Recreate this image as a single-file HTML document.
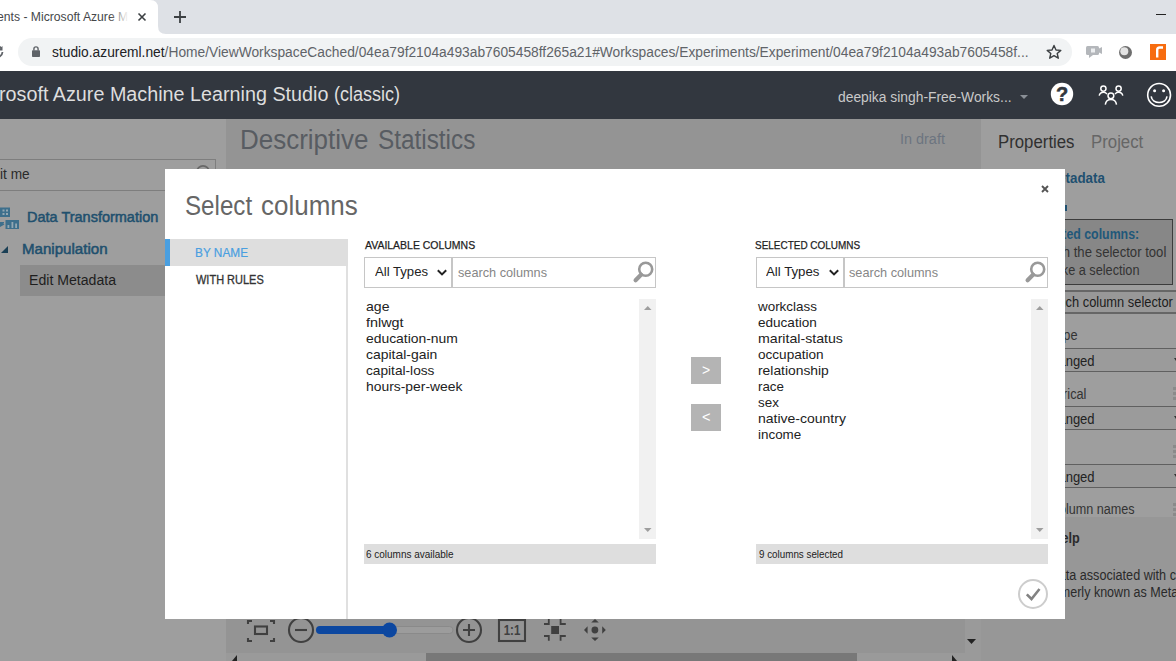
<!DOCTYPE html>
<html>
<head>
<meta charset="utf-8">
<title>Experiments - Microsoft Azure Machine Learning Studio (classic)</title>
<style>
*{box-sizing:border-box;margin:0;padding:0}
html,body{width:1176px;height:661px;overflow:hidden;background:#999;font-family:"Liberation Sans",sans-serif}
.a{position:absolute;white-space:nowrap;line-height:1}
.t{position:absolute;white-space:pre;line-height:1;transform-origin:0 0}
#tabbar{left:0;top:0;width:1176px;height:34px;background:#dee1e6}
#toolbar{left:0;top:34px;width:1176px;height:37px;background:#fff}
#pill{left:18px;top:38px;width:1054px;height:28px;border-radius:14px;background:#f1f3f4}
#hdr{left:0;top:71px;width:1176px;height:48px;background:#32373f}
#leftp{left:0;top:119px;width:226px;height:542px;background:#9e9e9e}
#center{left:226px;top:119px;width:755px;height:542px;background:#949494}
#rightp{left:981px;top:119px;width:195px;height:542px;background:#9e9e9e}
#modal{left:165px;top:169px;width:900px;height:450px;background:#fff}
</style>
</head>
<body>
<!-- browser chrome -->
<div class="a" id="tabbar"></div>
<svg class="a" style="left:0;top:0" width="170" height="34" viewBox="0 0 170 34"><path d="M0 0 H150 Q158 0 158 8 V26 Q158 34 166 34 H0 Z" fill="#fff"/></svg>
<svg class="a" style="left:136px;top:11px" width="12" height="12" viewBox="0 0 12 12"><path d="M2.500 2.500 L9.500 9.500 M9.500 2.500 L2.500 9.500" stroke="#3c4043" stroke-width="1.600" fill="none"/></svg>
<svg class="a" style="left:173px;top:10px" width="14" height="14" viewBox="0 0 14 14"><path d="M7 1 V13 M1 7 H13" stroke="#3c4043" stroke-width="1.8" fill="none"/></svg>
<div class="a" style="left:1156px;top:14px;width:10px;height:1px;background:#222"></div>

<div class="a" id="toolbar"></div>
<div class="a" id="pill"></div>
<svg class="a" style="left:-11px;top:44px" width="16" height="16" viewBox="0 0 16 16"><path d="M12.5 4.5 A5.5 5.5 0 1 0 13.5 8" stroke="#5f6368" stroke-width="1.8" fill="none"/><path d="M13.5 2 V6.5 H9 Z" fill="#5f6368"/></svg>
<svg class="a" style="left:32px;top:46px" width="8" height="11" viewBox="0 0 8 11"><rect x="0" y="4.200" width="8" height="6.800" rx="0.800" fill="#5f6368"/><path d="M1.900 4.500 V3 A2.100 2.100 0 0 1 6.100 3 V4.500" stroke="#5f6368" stroke-width="1.400" fill="none"/></svg>
<svg class="a" style="left:1046px;top:44px" width="16" height="16" viewBox="0 0 16 16"><path d="M8 1.500 L10 6 L14.800 6.400 L11.200 9.500 L12.300 14.200 L8 11.700 L3.700 14.200 L4.800 9.500 L1.200 6.400 L6 6 Z" stroke="#3c4043" stroke-width="1.400" fill="none" stroke-linejoin="round"/></svg>
<svg class="a" style="left:1085px;top:45px" width="18" height="14" viewBox="0 0 18 14"><rect x="1" y="1" width="13" height="9" rx="1.500" fill="#b4b7bb"/><path d="M14 3.500 L17 2 V9 L14 7.500 Z" fill="#b4b7bb"/><path d="M4 10 L4 13 L8 10 Z" fill="#b4b7bb"/><rect x="6" y="3.500" width="4" height="4" fill="#eceef0"/></svg>
<svg class="a" style="left:1118px;top:45px" width="15" height="15" viewBox="0 0 15 15"><circle cx="7.500" cy="7.500" r="6.500" fill="#6e6e6e"/><circle cx="6.300" cy="6.300" r="4" fill="#e4e4e4"/></svg>
<svg class="a" style="left:1150px;top:44px" width="16" height="16" viewBox="0 0 16 16"><rect x="0" y="0" width="16" height="16" fill="#f76c0f"/><path d="M7.200 13.500 V6 Q7.200 3.500 9.700 3.500 H13" stroke="#fff" stroke-width="2.400" fill="none"/></svg>

<!-- app header -->
<div class="a" id="hdr"></div>
<svg class="a" style="left:1019.500px;top:95px" width="8" height="4" viewBox="0 0 8 4"><path d="M0 0 H8 L4 4 Z" fill="#8a8f96"/></svg>
<svg class="a" style="left:1050px;top:82px" width="24" height="24" viewBox="0 0 24 24"><circle cx="12" cy="12" r="11.200" fill="#fff"/><text x="12.200" y="19" text-anchor="middle" font-family="Liberation Sans, sans-serif" font-weight="bold" font-size="20" fill="#32373f" stroke="#32373f" stroke-width="0.500">?</text></svg>
<svg class="a" style="left:1097px;top:82px" width="28" height="26" viewBox="0 0 28 26"><g stroke="#fff" stroke-width="1.500" fill="none"><circle cx="6.400" cy="6.600" r="2.600"/><circle cx="21.600" cy="6.600" r="2.600"/><circle cx="13.900" cy="13.800" r="2.900"/><path d="M2.200 13.600 Q3 10.300 6.400 10.300 Q8.500 10.300 10 12"/><path d="M25.800 13.600 Q25 10.300 21.600 10.300 Q19.500 10.300 18 12"/><path d="M8.300 22.600 Q9 17.600 13.900 17.600 Q18.800 17.600 19.500 22.600"/></g></svg>
<svg class="a" style="left:1145px;top:81px" width="28" height="28" viewBox="0 0 28 28"><g stroke="#fff" stroke-width="1.600" fill="none"><circle cx="14.100" cy="13.900" r="11.400"/><path d="M6.200 15.400 C7.200 23.600 21 23.600 22 15.400"/></g><circle cx="9.600" cy="9.700" r="1.500" fill="#fff"/><circle cx="18.600" cy="9.700" r="1.500" fill="#fff"/></svg>

<!-- dimmed page -->
<div class="a" id="leftp"></div>
<div class="a" id="center"></div>
<div class="a" id="rightp"></div>

<!-- left panel -->
<div class="a" style="left:-10px;top:159px;width:226px;height:32px;border:1px solid #7e7e7e"></div>
<svg class="a" style="left:194px;top:164px" width="18" height="10" viewBox="0 0 18 10"><circle cx="9" cy="8" r="6.200" stroke="#686868" stroke-width="1.700" fill="none"/></svg>
<svg class="a" style="left:0px;top:207px" width="20" height="23" viewBox="0 0 20 23"><g fill="#3d6f8c"><rect x="0" y="0.500" width="10" height="9.500"/><rect x="5.500" y="13" width="13.500" height="9"/><path d="M0 15 L4.500 17.500 L0 20 Z M0 15 H4 V16.500 H0Z"/></g><g fill="#93a7b2"><rect x="2.500" y="2.500" width="2" height="2"/><rect x="6" y="2.500" width="2" height="2"/><rect x="2.500" y="6" width="2" height="2"/><rect x="6" y="6" width="2" height="2"/><rect x="7.500" y="18" width="1.800" height="3"/><rect x="11.500" y="15" width="1.800" height="6"/><rect x="15.200" y="16.500" width="1.800" height="4.500"/></g></svg>
<svg class="a" style="left:1px;top:246px" width="7" height="7" viewBox="0 0 7 7"><path d="M0 7 H7 V0 Z" fill="#1a3f55"/></svg>
<div class="a" style="left:20px;top:265px;width:145px;height:31px;background:#8c8c8c"></div>

<!-- right panel boxes -->
<div class="a" style="left:1060px;top:219px;width:113px;height:66px;background:#878787;border:1px solid #3c3c3c"></div>
<div class="a" style="left:1060px;top:290px;width:130px;height:24px;background:#989898;border-top:2px solid #666;border-bottom:2px solid #666"></div>
<div class="a" style="left:1060px;top:348px;width:130px;height:24px;background:#9b9b9b;border-top:1.500px solid #606060;border-bottom:1.500px solid #606060"></div>
<div class="a" style="left:1060px;top:406px;width:130px;height:24px;background:#9b9b9b;border-top:1.500px solid #606060;border-bottom:1.500px solid #606060"></div>
<div class="a" style="left:1060px;top:464px;width:130px;height:24px;background:#9b9b9b;border-top:1.500px solid #606060;border-bottom:1.500px solid #606060"></div>
<div class="a" style="left:1173px;top:387px;width:3px;height:14px;background:repeating-linear-gradient(180deg,#8a8a8a 0 3px,transparent 3px 5px)"></div>
<div class="a" style="left:1173px;top:445px;width:3px;height:14px;background:repeating-linear-gradient(180deg,#8a8a8a 0 3px,transparent 3px 5px)"></div>
<div class="a" style="left:1173px;top:503px;width:3px;height:14px;background:repeating-linear-gradient(180deg,#8a8a8a 0 3px,transparent 3px 5px)"></div>
<svg class="a" style="left:1174px;top:358px" width="2" height="3" viewBox="0 0 2 3"><path d="M0 0 H2 V3 Z" fill="#333"/></svg>
<svg class="a" style="left:1174px;top:416px" width="2" height="3" viewBox="0 0 2 3"><path d="M0 0 H2 V3 Z" fill="#333"/></svg>
<svg class="a" style="left:1174px;top:474px" width="2" height="3" viewBox="0 0 2 3"><path d="M0 0 H2 V3 Z" fill="#333"/></svg>
<div class="a" style="left:981px;top:517px;width:195px;height:144px;background:#979797"></div>

<div class="a" style="left:1064px;top:205px;width:2.500px;height:6px;background:#1f5070"></div>
<div class="t" id="tabtitle" style="left:-3.31px;top:11px;font-size:12px;color:#45474a;transform:scaleX(1.0140);">ents - Microsoft Azure M</div>
<div class="t" id="url" style="left:51.52px;top:45px;font-size:14px;color:#5f6368;transform:scaleX(0.9843);"><span style="color:#202124">studio.azureml.net</span>/Home/ViewWorkspaceCached/04ea79f2104a493ab7605458ff265a21#Workspaces/Experiments/Experiment/04ea79f2104a493ab7605458f...</div>
<div class="t" id="apptitle1" style="left:-1.29px;top:84px;font-size:20px;color:#dedede;transform:scaleX(0.9876);">rosoft Azure Machine Learning Studio</div>
<div class="t" id="apptitle2" style="left:333.90px;top:84px;font-size:20px;color:#dedede;transform:scaleX(0.9014);">(classic)</div>
<div class="t" id="user" style="left:837.81px;top:90px;font-size:14px;color:#c9c9c9;transform:scaleX(0.9885);">deepika singh-Free-Works...</div>
<div class="t" id="itme" style="left:0.02px;top:167px;font-size:14px;color:#2a2a2a;transform:scaleX(0.9759);">it me</div>
<div class="t" id="dt" style="left:26.56px;top:210px;font-size:14px;color:#21506e;transform:scaleX(1.0352);-webkit-text-stroke:0.5px #21506e;">Data Transformation</div>
<div class="t" id="manip" style="left:22.32px;top:242px;font-size:14px;color:#21506e;transform:scaleX(1.0782);-webkit-text-stroke:0.5px #21506e;">Manipulation</div>
<div class="t" id="editmd" style="left:28.99px;top:273px;font-size:14px;color:#1e1e1e;transform:scaleX(1.0082);">Edit Metadata</div>
<div class="t" id="desc1" style="left:240.33px;top:127px;font-size:27px;color:#585c62;transform:scaleX(0.9615);">Descriptive</div>
<div class="t" id="desc2" style="left:377.60px;top:127px;font-size:27px;color:#585c62;transform:scaleX(0.9009);">Statistics</div>
<div class="t" id="draft" style="left:899.77px;top:132px;font-size:14px;color:#6c7480;transform:scaleX(1.0302);">In draft</div>
<div class="t" id="props" style="left:997.97px;top:133px;font-size:18px;color:#303030;transform:scaleX(0.9325);">Properties</div>
<div class="t" id="proj" style="left:1090.57px;top:133px;font-size:18px;color:#666666;transform:scaleX(0.9327);">Project</div>
<div class="t" id="tadata" style="left:1017.89px;top:171px;font-size:14px;font-weight:bold;color:#1f5070;transform:scaleX(0.9550);">Edit Metadata</div>
<div class="t" id="edcol" style="left:1029.86px;top:227px;font-size:14px;font-weight:bold;color:#1f587a;transform:scaleX(0.8823);">Selected columns:</div>
<div class="t" id="seltool" style="left:1026.52px;top:245px;font-size:14px;color:#333;transform:scaleX(0.9371);">Launch the selector tool</div>
<div class="t" id="makesel" style="left:1029.96px;top:263px;font-size:14px;color:#333;transform:scaleX(0.9078);">to make a selection</div>
<div class="t" id="chcol" style="left:1037.43px;top:295px;font-size:14px;color:#1c1c1c;transform:scaleX(0.9187);">Launch column selector</div>
<div class="t" id="pe" style="left:1022.80px;top:328px;font-size:14px;color:#333;transform:scaleX(0.9100);">Data type</div>
<div class="t" id="ng1" style="left:1028.07px;top:354px;font-size:14px;color:#222;transform:scaleX(0.9300);">Unchanged</div>
<div class="t" id="rical" style="left:1022.30px;top:387px;font-size:14px;color:#333;transform:scaleX(0.9100);">Categorical</div>
<div class="t" id="ng2" style="left:1028.07px;top:412px;font-size:14px;color:#222;transform:scaleX(0.9300);">Unchanged</div>
<div class="t" id="ng3" style="left:1028.07px;top:470px;font-size:14px;color:#222;transform:scaleX(0.9300);">Unchanged</div>
<div class="t" id="lumn" style="left:1024.30px;top:502px;font-size:14px;color:#333;transform:scaleX(0.9000);">New column names</div>
<div class="t" id="elp" style="left:1013.90px;top:531px;font-size:14px;font-weight:bold;color:#2a2a2a;transform:scaleX(0.9000);">Quick Help</div>
<div class="t" id="assoc" style="left:992.23px;top:568px;font-size:14px;color:#2a2a2a;transform:scaleX(0.9023);">Edits metadata associated with columns</div>
<div class="t" id="known" style="left:1041.11px;top:585px;font-size:14px;color:#2a2a2a;transform:scaleX(0.8948);">(formerly known as Metadata Editor)</div>
<div class="a" style="left:110px;top:4px;width:22px;height:26px;background:linear-gradient(90deg,rgba(255,255,255,0),rgba(255,255,255,0.95) 80%)"></div>

<!-- bottom toolbar on canvas -->
<div class="a" style="left:226px;top:653px;width:739px;height:8px;background:#9a9a9a"></div>
<div class="a" style="left:426px;top:653px;width:431px;height:8px;background:#787878"></div>
<div class="a" style="left:965px;top:619px;width:16px;height:42px;background:#9a9a9a"></div>
<svg class="a" style="left:232px;top:655px" width="6" height="6" viewBox="0 0 6 6"><path d="M5 0 V6 H0 Z" fill="#222"/></svg>
<svg class="a" style="left:951px;top:655px" width="6" height="6" viewBox="0 0 6 6"><path d="M1 0 V6 H6 Z" fill="#222"/></svg>
<svg class="a" style="left:967px;top:639px" width="9" height="5" viewBox="0 0 9 5"><path d="M0 0 H9 L4.500 5 Z" fill="#222"/></svg>
<svg class="a" id="zoomtools" style="left:240px;top:616px" width="380" height="30" viewBox="0 0 380 30">
 <g stroke="#404040" stroke-width="2.100" fill="none">
  <path d="M8 8 V5 H12 M30 5 H34 V8 M34 22 V25 H30 M12 25 H8 V22"/>
  <rect x="15" y="10.500" width="12" height="7.500"/>
  <circle cx="61" cy="14" r="12"/><path d="M55 14 H67"/>
  <circle cx="229" cy="14" r="12"/><path d="M223 14 H235 M229 8 V20"/>
  <rect x="259" y="4" width="26" height="21"/>
  <path d="M304 8 H308.800 V3 M320.600 3 V8 H325.800 M325.800 20 H320.600 V24.800 M308.800 24.800 V20 H304" stroke-width="1.800"/>
 </g>
 <rect x="76" y="10.500" width="137" height="7" rx="3.500" fill="#9c9c9c" stroke="#8a8a8a" stroke-width="1"/>
 <rect x="76" y="10" width="74" height="8" rx="4" fill="#0c47a0"/>
 <circle cx="149.500" cy="14" r="7.500" fill="#0c47a0"/>
 <rect x="311.200" y="10" width="7.800" height="8" fill="#404040"/>
 <text x="263.700" y="19.200" textLength="16.600" lengthAdjust="spacingAndGlyphs" font-family="Liberation Sans, sans-serif" font-size="14.500" font-weight="bold" fill="#404040">1:1</text>
 <g fill="#404040"><circle cx="354.900" cy="14" r="3.400"/><path d="M351.200 6.600 H358.800 L355 3 Z M351.200 21.400 H358.800 L355 25 Z M347.600 10.300 V17.700 L344 14 Z M362.200 10.300 V17.700 L365.800 14 Z"/></g>
</svg>

<!-- modal -->
<div class="a" id="modal"></div>
<svg class="a" style="left:1041px;top:185px" width="8" height="8" viewBox="0 0 8 8"><path d="M1 1 L7 7 M7 1 L1 7" stroke="#555" stroke-width="1.900" fill="none"/></svg>
<div class="a" style="left:165px;top:239px;width:183px;height:27px;background:#dedede"></div>
<div class="a" style="left:165px;top:239px;width:5px;height:27px;background:#4a9fe0"></div>
<div class="a" style="left:345.500px;top:266px;width:2.500px;height:353px;background:#e0e0e0"></div>

<div class="a" style="left:364px;top:257px;width:292px;height:31px;border:1px solid #c6c6c6;background:#fff"></div>
<div class="a" style="left:451px;top:257px;width:2px;height:31px;background:#c6c6c6"></div>
<svg class="a" style="left:437px;top:268.500px" width="10" height="7" viewBox="0 0 10 7"><path d="M0.800 1.200 L5 5.400 L9.200 1.200" stroke="#222" stroke-width="2" fill="none"/></svg>
<svg class="a" style="left:632px;top:260px" width="24" height="24" viewBox="0 0 24 24"><circle cx="13.700" cy="9.200" r="6.500" stroke="#999" stroke-width="2.600" fill="none"/><path d="M9 14.800 L3.600 20.200" stroke="#999" stroke-width="4.200" stroke-linecap="round"/></svg>
<div class="a" style="left:639px;top:299px;width:17px;height:240px;background:#f1f1f1"></div>
<svg class="a" style="left:644px;top:306px" width="7.500" height="4" viewBox="0 0 7.500 4"><path d="M0 4 H7.500 L3.750 0 Z" fill="#9e9e9e"/></svg>
<svg class="a" style="left:644px;top:528px" width="7.500" height="4" viewBox="0 0 7.500 4"><path d="M0 0 H7.500 L3.750 4 Z" fill="#9e9e9e"/></svg>
<div class="a" style="left:364px;top:544px;width:292px;height:20px;background:#dedede"></div>

<div class="a" style="left:691px;top:357px;width:30px;height:27px;background:#b4b4b4"></div>
<div class="a" style="left:691px;top:404px;width:30px;height:27px;background:#b4b4b4"></div>

<div class="a" style="left:756px;top:257px;width:292px;height:31px;border:1px solid #c6c6c6;background:#fff"></div>
<div class="a" style="left:843px;top:257px;width:2px;height:31px;background:#c6c6c6"></div>
<svg class="a" style="left:829px;top:268.500px" width="10" height="7" viewBox="0 0 10 7"><path d="M0.800 1.200 L5 5.400 L9.200 1.200" stroke="#222" stroke-width="2" fill="none"/></svg>
<svg class="a" style="left:1024px;top:260px" width="24" height="24" viewBox="0 0 24 24"><circle cx="13.700" cy="9.200" r="6.500" stroke="#999" stroke-width="2.600" fill="none"/><path d="M9 14.800 L3.600 20.200" stroke="#999" stroke-width="4.200" stroke-linecap="round"/></svg>
<div class="a" style="left:1031px;top:299px;width:17px;height:240px;background:#f1f1f1"></div>
<svg class="a" style="left:1036px;top:306px" width="7.500" height="4" viewBox="0 0 7.500 4"><path d="M0 4 H7.500 L3.750 0 Z" fill="#9e9e9e"/></svg>
<svg class="a" style="left:1036px;top:528px" width="7.500" height="4" viewBox="0 0 7.500 4"><path d="M0 0 H7.500 L3.750 4 Z" fill="#9e9e9e"/></svg>
<div class="a" style="left:756px;top:544px;width:292px;height:20px;background:#dedede"></div>

<svg class="a" style="left:1017px;top:578px" width="32" height="32" viewBox="0 0 32 32"><circle cx="16" cy="16" r="14" stroke="#cdcdcd" stroke-width="2" fill="#fff"/><path d="M9.800 16.300 L14.500 21 L22.500 11" stroke="#828282" stroke-width="2.600" fill="none"/></svg>

<div class="t" id="selcols1" style="left:184.81px;top:193px;font-size:27px;color:#666666;transform:scaleX(0.8946);">Select</div>
<div class="t" id="selcols2" style="left:261.44px;top:193px;font-size:27px;color:#666666;transform:scaleX(0.9626);">columns</div>
<div class="t" id="byname" style="left:194.76px;top:247px;font-size:12px;color:#4a9fe0;transform:scaleX(0.9856);-webkit-text-stroke:0.2px #4a9fe0;">BY NAME</div>
<div class="t" id="withrules" style="left:195.75px;top:274px;font-size:12px;color:#333;transform:scaleX(0.9155);-webkit-text-stroke:0.3px #333;">WITH RULES</div>
<div class="t" id="availh" style="left:364.60px;top:240px;font-size:11px;color:#1e1e1e;transform:scaleX(0.9513);-webkit-text-stroke:0.25px #1e1e1e;">AVAILABLE COLUMNS</div>
<div class="t" id="alltypes1" style="left:374.50px;top:265px;font-size:13px;color:#222;transform:scaleX(1.0096);">All Types</div>
<div class="t" id="search1" style="left:457.72px;top:266px;font-size:13px;color:#868686;transform:scaleX(0.9778);">search columns</div>
<div class="t" id="avail6" style="left:366.49px;top:549px;font-size:11px;color:#222;transform:scaleX(0.9063);">6 columns available</div>
<div class="t" id="selh" style="left:755.49px;top:240px;font-size:11px;color:#1e1e1e;transform:scaleX(0.9052);-webkit-text-stroke:0.25px #1e1e1e;">SELECTED COLUMNS</div>
<div class="t" id="alltypes2" style="left:766.00px;top:265px;font-size:13px;color:#222;transform:scaleX(1.0173);">All Types</div>
<div class="t" id="search2" style="left:849.32px;top:266px;font-size:13px;color:#868686;transform:scaleX(0.9778);">search columns</div>
<div class="t" id="sel9" style="left:758.61px;top:549px;font-size:11px;color:#222;transform:scaleX(0.8925);">9 columns selected</div>
<div class="t" id="a0" style="left:365.60px;top:300px;font-size:13px;color:#222;transform:scaleX(1.0810);">age</div>
<div class="t" id="a1" style="left:365.60px;top:316px;font-size:13px;color:#222;transform:scaleX(1.1059);">fnlwgt</div>
<div class="t" id="a2" style="left:365.60px;top:332px;font-size:13px;color:#222;transform:scaleX(1.0682);">education-num</div>
<div class="t" id="a3" style="left:365.60px;top:348px;font-size:13px;color:#222;transform:scaleX(1.0712);">capital-gain</div>
<div class="t" id="a4" style="left:365.60px;top:364px;font-size:13px;color:#222;transform:scaleX(1.0523);">capital-loss</div>
<div class="t" id="a5" style="left:365.60px;top:380px;font-size:13px;color:#222;transform:scaleX(1.0678);">hours-per-week</div>
<div class="t" id="s0" style="left:757.50px;top:300px;font-size:13px;color:#222;transform:scaleX(1.0316);">workclass</div>
<div class="t" id="s1" style="left:757.50px;top:316px;font-size:13px;color:#222;transform:scaleX(1.0411);">education</div>
<div class="t" id="s2" style="left:757.50px;top:332px;font-size:13px;color:#222;transform:scaleX(1.0885);">marital-status</div>
<div class="t" id="s3" style="left:757.50px;top:348px;font-size:13px;color:#222;transform:scaleX(1.0435);">occupation</div>
<div class="t" id="s4" style="left:757.50px;top:364px;font-size:13px;color:#222;transform:scaleX(1.0652);">relationship</div>
<div class="t" id="s5" style="left:757.50px;top:380px;font-size:13px;color:#222;transform:scaleX(1.0240);">race</div>
<div class="t" id="s6" style="left:757.50px;top:396px;font-size:13px;color:#222;transform:scaleX(1.0300);">sex</div>
<div class="t" id="s7" style="left:757.50px;top:412px;font-size:13px;color:#222;transform:scaleX(1.0768);">native-country</div>
<div class="t" id="s8" style="left:757.50px;top:428px;font-size:13px;color:#222;transform:scaleX(1.0310);">income</div>
<div class="t" id="gt" style="left:701.90px;top:363px;font-size:14px;color:#fff;transform:scaleX(1.0000);">&gt;</div>
<div class="t" id="lt" style="left:701.56px;top:410px;font-size:14px;color:#fff;transform:scaleX(1.0429);">&lt;</div>
</body>
</html>
